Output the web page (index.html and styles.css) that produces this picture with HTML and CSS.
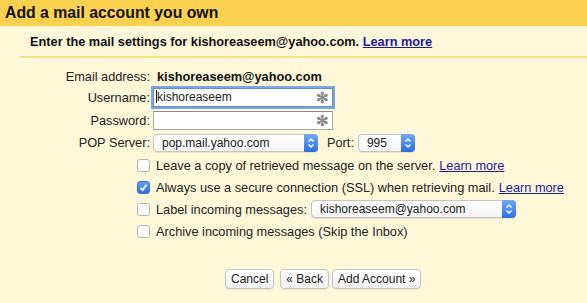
FILE: index.html
```html
<!DOCTYPE html>
<html>
<head>
<meta charset="utf-8">
<link rel="stylesheet" href="styles.css">
</head>
<body>
<div class="page">
  <div class="header">Add a mail account you own</div>
  <div class="sub">
    <div class="sub-text">Enter the mail settings for kishoreaseem@yahoo.com. <a href="#">Learn more</a></div>
  </div>
  <div class="form">
    <div class="lbl r1">Email address:</div>
    <div class="val r1 bold">kishoreaseem@yahoo.com</div>

    <div class="lbl r2">Username:</div>
    <div class="val r2"><div class="input focus"><span class="caret"></span>kishoreaseem<span class="star">&#x273B;</span></div></div>

    <div class="lbl r3">Password:</div>
    <div class="val r3"><div class="input"><span class="star">&#x273B;</span></div></div>

    <div class="lbl r4">POP Server:</div>
    <div class="val r4">
      <div class="select pop">pop.mail.yahoo.com<span class="step"><svg width="8" height="12" viewBox="0 0 8 12"><path d="M1.5 4.5 L4 2 L6.5 4.5 M1.5 7.5 L4 10 L6.5 7.5" fill="none" stroke="#fff" stroke-width="1.4"/></svg></span></div>
      <span class="port-l">Port:</span>
      <div class="select port">995<span class="step"><svg width="8" height="12" viewBox="0 0 8 12"><path d="M1.5 4.5 L4 2 L6.5 4.5 M1.5 7.5 L4 10 L6.5 7.5" fill="none" stroke="#fff" stroke-width="1.4"/></svg></span></div>
    </div>
  </div>
  <div class="checks">
    <div class="chk"><span class="box"></span>Leave a copy of retrieved message on the server. <a href="#">Learn more</a></div>
    <div class="chk"><span class="box on"><svg width="11" height="11" viewBox="0 0 11 11"><path d="M2.5 5.8 L4.6 8 L8.6 2.8" fill="none" stroke="#fff" stroke-width="1.8"/></svg></span>Always use a secure connection (SSL) when retrieving mail. <a href="#">Learn more</a></div>
    <div class="chk"><span class="box"></span>Label incoming messages: <div class="select lab">kishoreaseem@yahoo.com<span class="step"><svg width="8" height="12" viewBox="0 0 8 12"><path d="M1.5 4.5 L4 2 L6.5 4.5 M1.5 7.5 L4 10 L6.5 7.5" fill="none" stroke="#fff" stroke-width="1.4"/></svg></span></div></div>
    <div class="chk"><span class="box"></span>Archive incoming messages (Skip the Inbox)</div>
  </div>
  <div class="buttons">
    <button class="btn">Cancel</button>
    <button class="btn b2">&laquo; Back</button>
    <button class="btn b3">Add Account &raquo;</button>
  </div>
</div>
</body>
</html>
```
FILE: styles.css
```css
* { box-sizing: border-box; }
html, body { margin: 0; padding: 0; }
body {
  width: 587px;
  height: 303px;
  overflow: hidden;
  background: #fef7d8;
  font-family: "Liberation Sans", Arial, sans-serif;
  font-size: 12.75px;
  color: #222;
}
a { color: #1b1ba8; text-decoration: underline; }
.header {
  height: 26px;
  background: #fcd14f;
  font-weight: bold;
  font-size: 15.8px;
  color: #111;
  padding: 3px 0 0 5px;
  line-height: 20px;
}
.sub {
  padding-left: 20px;
}
.sub-text {
  height: 32px;
  padding: 8px 0 0 10px;
  font-weight: bold;
  color: #111;
  border-bottom: 2px solid #f5df8f;
  background: #fff7d9;
}
.sub-text a { color: #1b1ba8; }
.form {
  display: grid;
  grid-template-columns: 150px 1fr;
  column-gap: 3px;
  padding-top: 9px;
}
.lbl {
  display: flex;
  align-items: center;
  justify-content: flex-end;
  color: #222;
}
.val { display: flex; align-items: center; }
.r1 { height: 19px; }
.r2 { height: 23px; }
.r3 { height: 22px; }
.r4 { height: 23px; }
.bold { font-weight: bold; color: #111; padding-left: 4px; }
.input {
  position: relative;
  width: 180px;
  height: 19px;
  border: 1px solid #a9a9a9;
  border-top-color: #8c8c8c;
  background: #fff;
  font-size: 12px;
  line-height: 17px;
  padding-left: 2px;
  color: #222;
}
.input.focus {
  box-shadow: 0 0 0 2px #7aa7e0;
  border-color: #6b8fc4;
}
.caret {
  display: inline-block;
  width: 1px;
  height: 13px;
  background: #000;
  vertical-align: -2px;
}
.star {
  position: absolute;
  right: 3px;
  top: 0;
  color: #8a8a8a;
  font-size: 15px;
  line-height: 17px;
  font-weight: bold;
}
.select {
  position: relative;
  height: 18px;
  border: 1px solid #c4c4c4;
  border-radius: 4px;
  background: linear-gradient(#ffffff, #f4f4f4);
  font-size: 12px;
  line-height: 16px;
  padding-left: 8px;
  color: #222;
  box-shadow: 0 1px 1px rgba(0,0,0,0.08);
}
.step {
  position: absolute;
  right: -1px;
  top: -1px;
  width: 14px;
  height: 18px;
  border-radius: 0 4px 4px 0;
  background: linear-gradient(#6fa9f5, #2f6fdc);
  display: flex;
  align-items: center;
  justify-content: center;
}
.pop { width: 165px; }
.port-l { margin: 0 4px 0 9px; }
.port { width: 57px; }
.checks { padding-left: 137px; }
.chk {
  display: flex;
  align-items: center;
  height: 22px;
  color: #222;
}
.box {
  width: 13px;
  height: 13px;
  border: 1px solid #b3b3b3;
  border-radius: 3px;
  background: #fff;
  margin-right: 6px;
  flex: none;
  display: flex;
  align-items: center;
  justify-content: center;
}
.box.on {
  background: linear-gradient(#5fa0f2, #2d72dc);
  border-color: #3a74d0;
}
.chk a { margin-left: 4px; }
.lab { width: 205px; margin-left: 4px; }
.buttons {
  display: flex;
  padding-top: 27px;
  padding-left: 225px;
}
.btn {
  font-family: "Liberation Sans", Arial, sans-serif;
  font-size: 12px;
  height: 20px;
  padding: 0 5px;
  margin: 0;
  border: 1px solid #c6c6c6;
  border-radius: 4px;
  background: linear-gradient(#ffffff, #f1f1f1);
  color: #222;
  box-shadow: 0 1px 1px rgba(0,0,0,0.08);
}
.b2 { margin-left: 6px; }
.b3 { margin-left: 3px; }
```
